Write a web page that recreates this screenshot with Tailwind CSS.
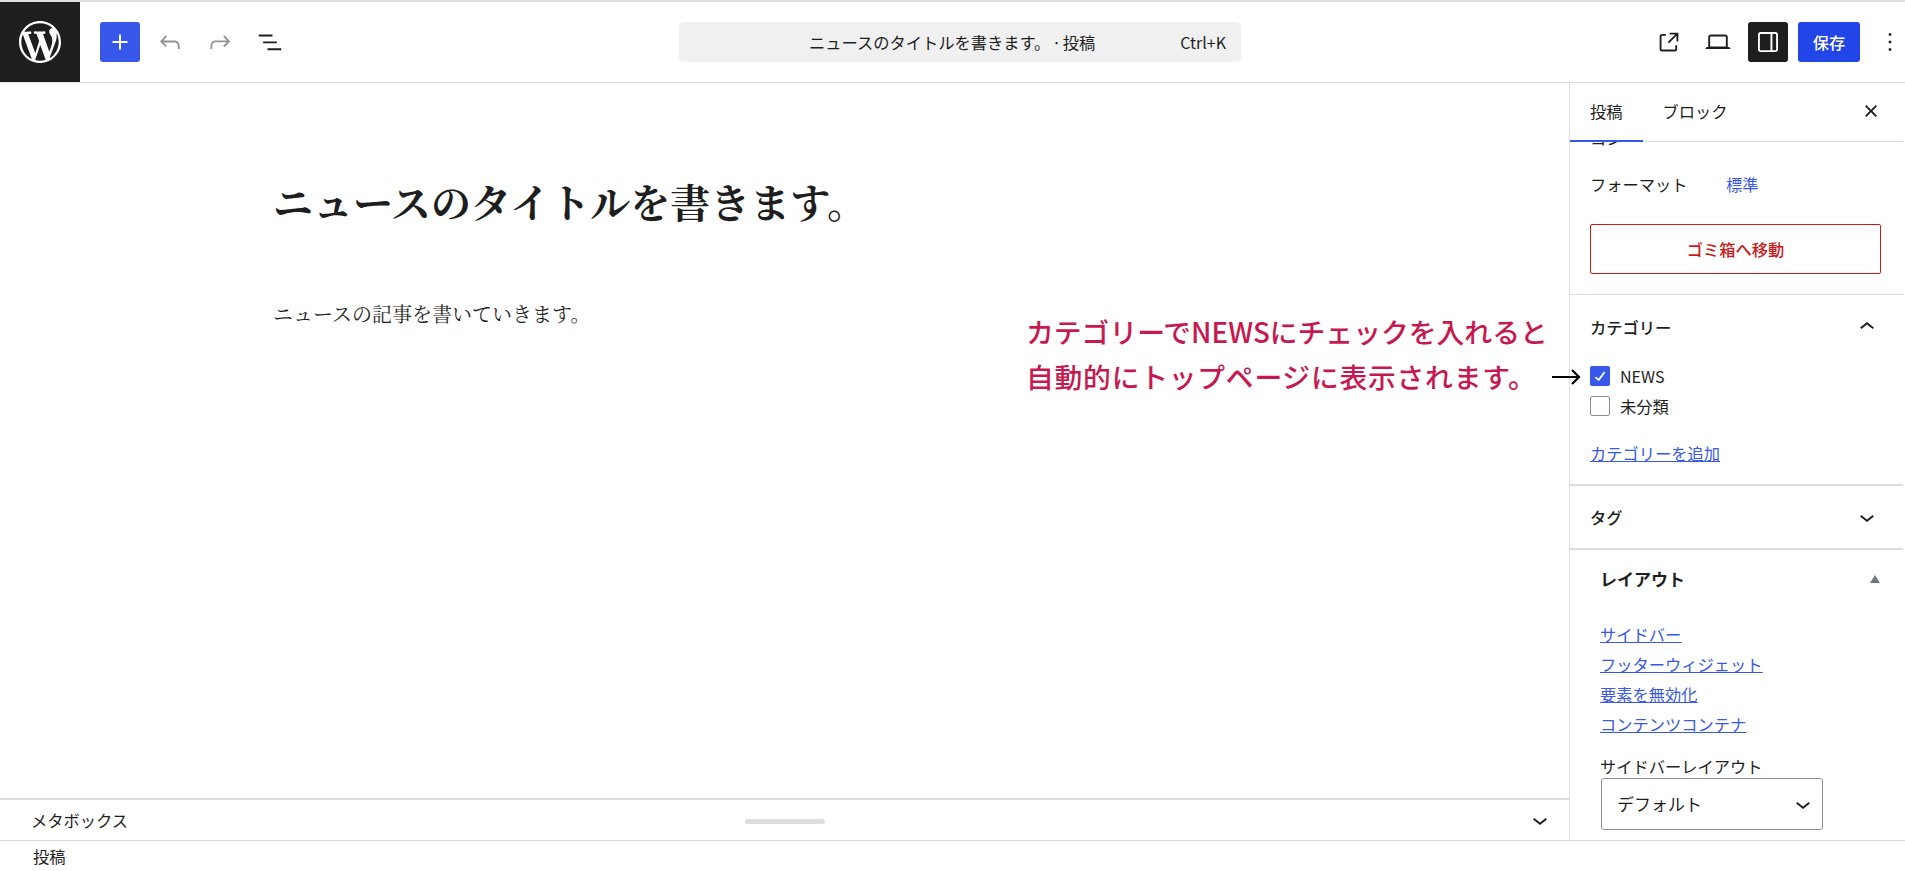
<!DOCTYPE html>
<html lang="ja">
<head>
    <meta charset="UTF-8">
    <title>投稿を編集</title>
    <script src="https://cdn.jsdelivr.net/npm/@tailwindcss/browser@4"></script>
</head>
<body class="bg-white text-[#1e1e1e] h-screen overflow-hidden flex flex-col font-['Noto_Sans_CJK_JP',sans-serif]">
    <!-- Top bar -->
    <header class="h-[83px] shrink-0 border-t-[2px] border-b-[1px] border-[#e0e0e0] flex items-center">
        <div class="w-[679px] h-full flex items-center">
            <div class="w-20 h-full bg-[#1e1e1e] flex items-center justify-center">
                <svg class="w-[42px] h-[42px]" viewBox="0 0 20 20" fill="#fff"><path d="M20 10c0-5.51-4.49-10-10-10C4.48 0 0 4.49 0 10c0 5.52 4.48 10 10 10 5.51 0 10-4.48 10-10zM7.78 15.37L4.37 6.22c.55-.02 1.17-.08 1.17-.08.5-.06.44-1.13-.06-1.11 0 0-1.45.11-2.37.11-.18 0-.37 0-.58-.01C4.12 2.69 6.87 1.11 10 1.11c2.33 0 4.45.87 6.05 2.34-.68-.11-1.65.39-1.65 1.58 0 .74.45 1.36.9 2.1.35.61.55 1.36.55 2.46 0 1.49-1.4 5-1.4 5l-3.03-8.37c.54-.02.82-.17.82-.17.5-.05.44-1.25-.06-1.22 0 0-1.44.12-2.38.12-.87 0-2.33-.12-2.33-.12-.5-.03-.56 1.2-.06 1.22l.92.08 1.26 3.41zM17.41 10c.24-.64.74-1.87.43-4.25.7 1.29 1.05 2.71 1.05 4.25 0 3.29-1.73 6.24-4.4 7.78.97-2.59 1.94-5.2 2.92-7.78zM6.1 18.09C3.12 16.65 1.11 13.53 1.11 10c0-1.3.23-2.48.72-3.59C3.25 10.3 4.67 14.2 6.1 18.09zm4.03-6.63l2.58 6.98c-.86.29-1.76.45-2.71.45-.79 0-1.57-.11-2.29-.33.81-2.38 1.62-4.74 2.42-7.1z"/></svg>
            </div>
            <button class="ml-5 w-10 h-10 bg-[#3858e9] rounded-[3px] flex items-center justify-center">
                <svg class="w-[30px] h-[30px]" viewBox="0 0 24 24" fill="#fff"><path d="M18 11.2h-5.2V6h-1.6v5.2H6v1.6h5.2V18h1.6v-5.2H18z"/></svg>
            </button>
            <button class="ml-[5px] w-[50px] h-10 flex items-center justify-center">
                <svg class="w-[30px] h-[30px]" viewBox="0 0 24 24" fill="#949494"><path d="M18.3 11.7c-.6-.6-1.4-.9-2.3-.9H6.7l2.9-3.3-1.1-1-4.5 5L8.5 16l1-1-2.7-2.7H16c.5 0 .9.2 1.3.5 1 1 1 3.4 1 4.5v.3h1.5v-.2c0-1.5 0-4.3-1.5-5.7z"/></svg>
            </button>
            <button class="w-[50px] h-10 flex items-center justify-center">
                <svg class="w-[30px] h-[30px]" viewBox="0 0 24 24" fill="#949494"><path d="M15.6 6.5l-1.1 1 2.9 3.3H8c-.9 0-1.7.3-2.3.9-1.4 1.5-1.4 4.2-1.4 5.6v.2h1.5v-.3c0-1.1 0-3.5 1-4.5.3-.3.7-.5 1.3-.5h9.2L14.5 15l1.1 1.1 4.6-4.6-4.6-5z"/></svg>
            </button>
            <button class="w-[50px] h-10 flex items-center justify-center">
                <svg class="w-[30px] h-[30px]" viewBox="0 0 24 24" fill="#1e1e1e"><path d="M3 6h11v1.5H3V6zm3.5 5.5h11V13h-11v-1.5zM21 17H10v1.5h11V17z"/></svg>
            </button>
        </div>

        <!-- Command bar -->
        <div class="w-[562px] h-10 bg-[#f0f0f0] rounded-[5px] flex items-center justify-between pl-[130px] pr-[15px] text-[16.25px]">
            <span class="[word-spacing:-2px]">ニュースのタイトルを書きます。 · 投稿</span>
            <span class="text-[16px]">Ctrl+K</span>
        </div>

        <div class="flex-1 flex items-center justify-end">
            <button class="w-[50px] h-10 flex items-center justify-center">
                <svg class="w-[30px] h-[30px]" viewBox="0 0 24 24" fill="#1e1e1e"><path d="M19.5 4.5h-7V6h4.44l-5.97 5.97 1.06 1.06L18 7.06v4.44h1.5v-7Zm-13 1a2 2 0 0 0-2 2v10a2 2 0 0 0 2 2h10a2 2 0 0 0 2-2v-3H17v3a.5.5 0 0 1-.5.5h-10a.5.5 0 0 1-.5-.5v-10a.5.5 0 0 1 .5-.5h3V5.5h-3Z"/></svg>
            </button>
            <button class="w-[48px] h-10 flex items-center justify-center">
                <svg class="w-[30px] h-[30px]" viewBox="0 0 24 24" fill="#1e1e1e"><path d="M20.5 16h-.7V8c0-1.1-.9-2-2-2H6.2c-1.1 0-2 .9-2 2v8h-.7c-.8 0-1.5.7-1.5 1.5h20c0-.8-.7-1.5-1.5-1.5zM5.7 8c0-.3.2-.5.5-.5h11.6c.3 0 .5.2.5.5v7.6H5.7V8z"/></svg>
            </button>
            <button class="ml-[6px] w-10 h-10 bg-[#1e1e1e] rounded-[3px] flex items-center justify-center">
                <svg class="w-[30px] h-[30px]" viewBox="0 0 24 24" fill="#fff"><path d="M18 4H6c-1.1 0-2 .9-2 2v12c0 1.1.9 2 2 2h12c1.1 0 2-.9 2-2V6c0-1.1-.9-2-2-2zm-4 14.5H6c-.3 0-.5-.2-.5-.5V6c0-.3.2-.5.5-.5h8v13zm4.5-.5c0 .3-.2.5-.5.5h-2.5v-13H18c.3 0 .5.2.5.5v12z"/></svg>
            </button>
            <button class="ml-[10px] w-[62px] h-10 bg-[#2145e6] rounded-[3px] text-white text-[16.25px] font-medium">保存</button>
            <button class="ml-[15px] w-[30px] h-10 flex items-center justify-center">
                <svg class="w-[30px] h-[30px]" viewBox="0 0 24 24" fill="#1e1e1e"><path d="M13 19h-2v-2h2v2zm0-6h-2v-2h2v2zm0-6h-2V5h2v2z"/></svg>
            </button>
        </div>
    </header>

    <div class="flex-1 flex min-h-0 relative">
        <!-- Editor -->
        <main class="flex-1 flex flex-col min-w-0">
            <div class="flex-1 pl-[273px] pt-[93px] font-['Noto_Serif_CJK_JP','Noto_Sans_CJK_JP',serif]">
                <h1 class="text-[40px] leading-[50px] font-bold">ニュースのタイトルを書きます。</h1>
                <p class="mt-[73px] text-[20px] leading-[30px]">ニュースの記事を書いていきます。</p>
            </div>
            <div class="h-[42px] shrink-0 border-t-[2px] border-[#ddd] flex items-center pl-[31px] pr-[14px] relative">
                <span class="text-[16.25px]">メタボックス</span>
                <span class="absolute left-[745px] top-[19px] w-20 h-[5px] bg-[#ddd] rounded-[3px]"></span>
                <svg class="ml-auto w-[30px] h-[30px]" viewBox="0 0 24 24" fill="#1e1e1e"><path d="M17.5 11.6L12 16l-5.5-4.4.9-1.2L12 14l4.5-3.6 1 1.2z"/></svg>
            </div>
        </main>

        <!-- Annotation laid over the editor -->
        <div class="absolute left-[1026px] top-[226px] text-[27.8px] leading-[45px] font-medium text-[#c7194f] whitespace-nowrap">
            カテゴリーでNEWSにチェックを入れると<br><span class="tracking-[0.75px]">自動的にトップページに表示されます。</span>
        </div>
        <svg class="absolute left-[1552px] top-[285px] w-[29px] h-[18px]" viewBox="0 0 29 18" fill="none" stroke="#000" stroke-width="2.2"><path d="M0 9h27M20 2l7 7-7 7"/></svg>

        <!-- Sidebar -->
        <aside class="w-[336px] shrink-0 border-l-[1.5px] border-[#ddd] flex flex-col overflow-hidden">
            <div class="w-[333px] h-[59px] shrink-0 border-b border-[#ddd] flex items-center relative text-[16.25px] pb-[2px]">
                <span class="ml-5">投稿</span>
                <span class="ml-[40px]">ブロック</span>
                <span class="absolute left-0 bottom-[-1px] w-[73px] h-[2px] bg-[#3858e9]"></span>
                <svg class="ml-auto mr-[17px] w-[30px] h-[30px]" viewBox="0 0 24 24" fill="#1e1e1e"><path d="M12 13.06l3.712 3.713 1.061-1.06L13.061 12l3.712-3.712-1.06-1.06L12 10.938 8.288 7.227l-1.061 1.06L10.939 12l-3.712 3.712 1.06 1.061L12 13.061z"/></svg>
            </div>
            <div class="w-[333px] flex-1 overflow-hidden text-[16.25px]">
                <!-- scrolled post panel -->
                <div class="h-[153px] border-b-[1.5px] border-[#ddd] pl-5 overflow-hidden">
                    <div class="h-[5px] overflow-hidden"><div class="-mt-[15px] leading-[22px]">コン</div></div>
                    <div class="mt-[25px] flex leading-6">
                        <span class="w-[136px]">フォーマット</span>
                        <span class="text-[#3858e9]">標準</span>
                    </div>
                    <button class="mt-[28px] w-[291px] h-[50px] border border-[#cc1818] rounded-[2px] text-[#cc1818] font-medium">ゴミ箱へ移動</button>
                </div>
                <div class="h-[191px] border-b-[2px] border-[#ddd] pl-5">
                    <div class="h-[68px] flex items-center justify-between pr-[21px] pb-1 font-medium">
                        <span>カテゴリー</span>
                        <svg class="w-[30px] h-[30px]" viewBox="0 0 24 24" fill="#1e1e1e"><path d="M6.5 12.4L12 8l5.5 4.4-.9 1.2L12 10l-4.5 3.6-1-1.2z"/></svg>
                    </div>
                    <div class="mt-[3px] flex items-center gap-[10px] h-5">
                        <span class="w-5 h-5 bg-[#3858e9] rounded-[2px] flex items-center justify-center">
                            <svg class="w-[20px] h-[20px]" viewBox="0 0 24 24" fill="#fff" stroke="#fff" stroke-width="0.8"><path d="M16.7 7.1l-6.3 8.5-3.3-2.5-.9 1.2 4.5 3.4L17.9 8z"/></svg>
                        </span>
                        <span class="text-[16px]">NEWS</span>
                    </div>
                    <div class="mt-[10px] flex items-center gap-[10px] h-5">
                        <span class="w-5 h-5 border border-[#8c8f94] rounded-[2px]"></span>
                        <span>未分類</span>
                    </div>
                    <a href="#" class="block mt-[25px] leading-6 text-[#3858e9] underline">カテゴリーを追加</a>
                </div>
                <div class="h-[64px] border-b-[2px] border-[#ddd] pl-5 pr-[21px] flex items-center justify-between font-medium">
                    <span>タグ</span>
                    <svg class="w-[30px] h-[30px]" viewBox="0 0 24 24" fill="#1e1e1e"><path d="M17.5 11.6L12 16l-5.5-4.4.9-1.2L12 14l4.5-3.6 1 1.2z"/></svg>
                </div>
                <!-- Layout metabox -->
                <div class="pl-[30px]">
                    <div class="h-[57px] flex items-center justify-between pr-[23px]">
                        <span class="text-[17px] font-bold">レイアウト</span>
                        <span class="w-0 h-0 border-x-[5px] border-x-transparent border-b-[8px] border-b-[#72777c]"></span>
                    </div>
                    <div class="mt-[12px] flex flex-col items-start leading-[30px] text-[#3858e9] underline">
                        <a href="#">サイドバー</a>
                        <a href="#">フッターウィジェット</a>
                        <a href="#">要素を無効化</a>
                        <a href="#">コンテンツコンテナ</a>
                    </div>
                    <div class="mt-[15px] leading-6">サイドバーレイアウト</div>
                    <div class="ml-[1px] w-[222px] h-[52px] border border-[#8c8f94] rounded-[3px] flex items-center justify-between pl-[15px] pr-[4px] text-[17px]">
                        <span>デフォルト</span>
                        <svg class="w-[30px] h-[30px]" viewBox="0 0 24 24" fill="#1e1e1e"><path d="M17.5 11.6L12 16l-5.5-4.4.9-1.2L12 14l4.5-3.6 1 1.2z"/></svg>
                    </div>
                </div>
            </div>
        </aside>
    </div>

    <!-- Status bar -->
    <footer class="h-[31px] shrink-0 border-t-[1.5px] border-[#ddd] flex items-center pl-[33px] text-[16.25px]">投稿</footer>
</body>
</html>
